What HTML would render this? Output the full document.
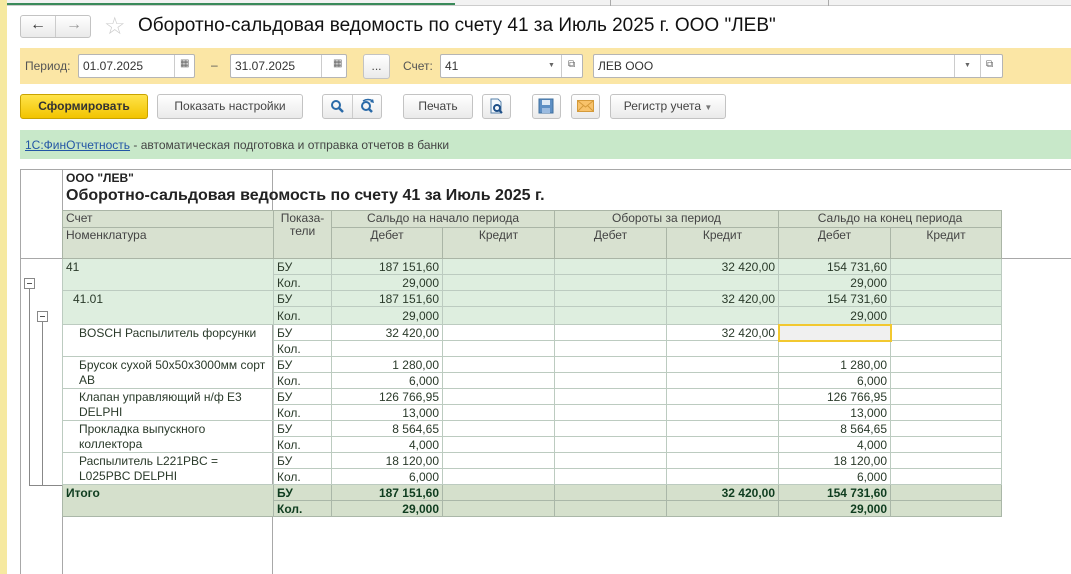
<!DOCTYPE html>
<html><head><meta charset="utf-8"><style>
*{box-sizing:border-box;margin:0;padding:0}
body{width:1071px;height:574px;overflow:hidden;background:#fff;font-family:"Liberation Sans",Arial,sans-serif;font-size:12px;color:#333;position:relative}
.a{position:absolute}
.btn{position:absolute;height:25px;border:1px solid #c3c3c3;border-radius:3px;background:linear-gradient(#fff,#eaeaea);font-size:12px;color:#444;text-align:center;line-height:23px}
.inp{position:absolute;height:24px;border:1px solid #b5b5b5;background:#fff;border-radius:2px;line-height:22px;padding-left:4px;font-size:12px;color:#333}
table{border-collapse:collapse;table-layout:fixed;position:absolute}
td{border:1px solid #bccbc0;padding:0 3px;height:16px;line-height:14px;white-space:nowrap;overflow:hidden;font-size:12px;color:#2a3a2a}
.r{text-align:right}
.g td{background:#deeedf}
.t td{background:#d5e0cc;font-weight:bold;color:#0f3d1f;border-color:#aab7a8}
.h td{background:#d8e1d0;color:#444;border-color:#aab5a6;vertical-align:top}
</style></head><body>
<div class="a" style="left:0;top:0;width:7px;height:574px;background:#f6e9a0"></div>
<div class="a" style="left:7px;top:0;width:1064px;height:6px;background:#f2f2f2;border-bottom:1px solid #ccc"></div>
<div class="a" style="left:7px;top:3px;width:448px;height:2px;background:#3a8a5a"></div>
<div class="a" style="left:610px;top:0;width:1px;height:6px;background:#aaa"></div>
<div class="a" style="left:828px;top:0;width:1px;height:6px;background:#aaa"></div>

<div class="btn" style="left:20px;top:15px;width:71px;height:23px"></div>
<div class="a" style="left:55px;top:16px;width:1px;height:21px;background:#ccc"></div>
<div class="a" style="left:30px;top:16px;font-size:16px;color:#333">&#8592;</div>
<div class="a" style="left:66px;top:16px;font-size:16px;color:#999">&#8594;</div>
<div class="a" style="left:104px;top:12px;font-size:24px;color:#ccc">&#9734;</div>
<div class="a" style="left:138px;top:15px;font-size:19px;color:#111">Оборотно-сальдовая ведомость по счету 41 за Июль 2025 г. ООО "ЛЕВ"</div>

<div class="a" style="left:20px;top:48px;width:1051px;height:36px;background:#fbe6a5"></div>
<div class="a" style="left:25px;top:59px;color:#555">Период:</div>
<div class="inp" style="left:78px;top:54px;width:117px">01.07.2025</div>
<div class="a" style="left:174px;top:55px;width:1px;height:22px;background:#ccc"></div>
<div class="a" style="left:180px;top:58px;font-size:10px;color:#666">&#9638;</div>
<div class="a" style="left:211px;top:58px;color:#555">–</div>
<div class="inp" style="left:230px;top:54px;width:117px">31.07.2025</div>
<div class="a" style="left:321px;top:55px;width:1px;height:22px;background:#ccc"></div>
<div class="a" style="left:333px;top:58px;font-size:10px;color:#666">&#9638;</div>
<div class="btn" style="left:363px;top:54px;width:27px">...</div>
<div class="a" style="left:403px;top:59px;color:#555">Счет:</div>
<div class="inp" style="left:440px;top:54px;width:143px">41</div>
<div class="a" style="left:561px;top:55px;width:1px;height:22px;background:#ccc"></div>
<div class="a" style="left:548px;top:62px;font-size:7px;color:#666">&#9660;</div>
<div class="a" style="left:568px;top:59px;font-size:10px;color:#666">&#10697;</div>
<div class="inp" style="left:593px;top:54px;width:410px">ЛЕВ ООО</div>
<div class="a" style="left:954px;top:55px;width:1px;height:22px;background:#ccc"></div>
<div class="a" style="left:980px;top:55px;width:1px;height:22px;background:#ccc"></div>
<div class="a" style="left:964px;top:62px;font-size:7px;color:#666">&#9660;</div>
<div class="a" style="left:986px;top:59px;font-size:10px;color:#666">&#10697;</div>

<div class="btn" style="left:20px;top:94px;width:128px;background:linear-gradient(#ffe34a,#f2c400);border-color:#c9a300;font-weight:bold;color:#333">Сформировать</div>
<div class="btn" style="left:157px;top:94px;width:146px">Показать настройки</div>
<div class="btn" style="left:322px;top:94px;width:60px"></div>
<div class="a" style="left:352px;top:95px;width:1px;height:23px;background:#ccc"></div>
<svg class="a" style="left:330px;top:99px" width="14" height="14"><circle cx="6" cy="6" r="4" fill="none" stroke="#2a6aa8" stroke-width="2"/><line x1="9" y1="9" x2="13" y2="13" stroke="#2a6aa8" stroke-width="2.5"/></svg>
<svg class="a" style="left:360px;top:98px" width="16" height="15"><circle cx="6" cy="8" r="4" fill="none" stroke="#2a6aa8" stroke-width="2"/><line x1="9" y1="11" x2="12" y2="14" stroke="#2a6aa8" stroke-width="2.5"/><path d="M3 3 Q8 0 13 3" fill="none" stroke="#2a6aa8" stroke-width="1.5"/><path d="M13 1 L14 5 L10 4Z" fill="#2a6aa8"/></svg>
<div class="btn" style="left:403px;top:94px;width:70px">Печать</div>
<div class="btn" style="left:482px;top:94px;width:29px"></div>
<svg class="a" style="left:489px;top:98px" width="16" height="17"><path d="M2 1 H9 L12 4 V15 H2Z" fill="#f4f8fc" stroke="#5580aa"/><circle cx="8" cy="10" r="3" fill="none" stroke="#1e4f88" stroke-width="2"/><line x1="10" y1="12" x2="13" y2="15" stroke="#1e4f88" stroke-width="2"/></svg>
<div class="btn" style="left:532px;top:94px;width:29px"></div>
<svg class="a" style="left:538px;top:98px" width="16" height="16"><rect x="1" y="1" width="14" height="14" fill="#5d8fc4" stroke="#3e6f9e"/><rect x="4" y="2" width="8" height="5" fill="#dfeaf5"/><rect x="4" y="10" width="8" height="5" fill="#9bbbe0"/></svg>
<div class="btn" style="left:571px;top:94px;width:29px"></div>
<svg class="a" style="left:577px;top:100px" width="17" height="12"><rect x="0.5" y="0.5" width="16" height="11" fill="#f8c26a" stroke="#d49a3a"/><path d="M1 1 L8.5 7 L16 1 M1 11 L6.5 5.5 M16 11 L10.5 5.5" fill="none" stroke="#d49a3a"/></svg>
<div class="btn" style="left:610px;top:94px;width:116px">Регистр учета <span style="font-size:8px;color:#777">&#9660;</span></div>

<div class="a" style="left:20px;top:130px;width:1051px;height:29px;background:#c8e8c9"></div>
<div class="a" style="left:25px;top:138px;color:#444"><span style="color:#2356a5;text-decoration:underline">1С:ФинОтчетность</span> - автоматическая подготовка и отправка отчетов в банки</div>

<div class="a" style="left:20px;top:169px;width:1051px;height:1px;background:#a8a8a8"></div>
<div class="a" style="left:20px;top:169px;width:1px;height:405px;background:#a8a8a8"></div>
<div class="a" style="left:62px;top:169px;width:1px;height:405px;background:#a8a8a8"></div>
<div class="a" style="left:272px;top:169px;width:1px;height:405px;background:#a8a8a8"></div>
<div class="a" style="left:20px;top:258px;width:1051px;height:1px;background:#a8a8a8"></div>
<div class="a" style="left:66px;top:171px;font-size:12px;font-weight:bold;color:#222">ООО "ЛЕВ"</div>
<div class="a" style="left:66px;top:187px;font-size:16px;font-weight:bold;color:#222">Оборотно-сальдовая ведомость по счету 41 за Июль 2025 г.</div>

<div class="a" style="left:24px;top:278px;width:11px;height:11px;border:1px solid #888;background:#fff"><div style="margin:4px 2px 0;height:1px;background:#555"></div></div>
<div class="a" style="left:37px;top:311px;width:11px;height:11px;border:1px solid #888;background:#fff"><div style="margin:4px 2px 0;height:1px;background:#555"></div></div>
<div class="a" style="left:29px;top:289px;width:1px;height:197px;background:#888"></div>
<div class="a" style="left:42px;top:322px;width:1px;height:164px;background:#888"></div>
<div class="a" style="left:29px;top:485px;width:33px;height:1px;background:#888"></div>

<table style="left:62px;top:210px">
<colgroup><col style="width:211px"><col style="width:58px"><col style="width:111px"><col style="width:112px"><col style="width:112px"><col style="width:112px"><col style="width:112px"><col style="width:111px"></colgroup>
<tr class="h"><td style="height:17px">Счет</td><td rowspan="2" style="text-align:center;line-height:13px;padding-top:1px">Показа-<br>тели</td><td colspan="2" style="text-align:center">Сальдо на начало периода</td><td colspan="2" style="text-align:center">Обороты за период</td><td colspan="2" style="text-align:center">Сальдо на конец периода</td></tr>
<tr class="h"><td style="height:31px">Номенклатура</td><td style="text-align:center">Дебет</td><td style="text-align:center">Кредит</td><td style="text-align:center">Дебет</td><td style="text-align:center">Кредит</td><td style="text-align:center">Дебет</td><td style="text-align:center">Кредит</td></tr>
<tr class="g"><td style="border-bottom:none">41</td><td>БУ</td><td class="r">187 151,60</td><td></td><td></td><td class="r">32 420,00</td><td class="r">154 731,60</td><td></td></tr>
<tr class="g"><td style="border-top:none"></td><td>Кол.</td><td class="r">29,000</td><td></td><td></td><td></td><td class="r">29,000</td><td></td></tr>
<tr class="g"><td style="border-bottom:none;padding-left:10px">41.01</td><td>БУ</td><td class="r">187 151,60</td><td></td><td></td><td class="r">32 420,00</td><td class="r">154 731,60</td><td></td></tr>
<tr class="g"><td style="border-top:none;height:18px"></td><td>Кол.</td><td class="r">29,000</td><td></td><td></td><td></td><td class="r">29,000</td><td></td></tr>
<tr><td style="border-bottom:none;padding-left:16px">BOSCH Распылитель форсунки</td><td>БУ</td><td class="r">32 420,00</td><td></td><td></td><td class="r">32 420,00</td><td style="background:#f0f0f0;outline:2px solid #f2c830;outline-offset:-1px"></td><td></td></tr>
<tr><td style="border-top:none"></td><td>Кол.</td><td></td><td></td><td></td><td></td><td></td><td></td></tr>
<tr><td style="border-bottom:none;padding-left:16px">Брусок сухой 50x50x3000мм сорт</td><td>БУ</td><td class="r">1 280,00</td><td></td><td></td><td></td><td class="r">1 280,00</td><td></td></tr>
<tr><td style="border-top:none;padding-left:16px">АВ</td><td>Кол.</td><td class="r">6,000</td><td></td><td></td><td></td><td class="r">6,000</td><td></td></tr>
<tr><td style="border-bottom:none;padding-left:16px">Клапан управляющий н/ф E3</td><td>БУ</td><td class="r">126 766,95</td><td></td><td></td><td></td><td class="r">126 766,95</td><td></td></tr>
<tr><td style="border-top:none;padding-left:16px">DELPHI</td><td>Кол.</td><td class="r">13,000</td><td></td><td></td><td></td><td class="r">13,000</td><td></td></tr>
<tr><td style="border-bottom:none;padding-left:16px">Прокладка выпускного</td><td>БУ</td><td class="r">8 564,65</td><td></td><td></td><td></td><td class="r">8 564,65</td><td></td></tr>
<tr><td style="border-top:none;padding-left:16px">коллектора</td><td>Кол.</td><td class="r">4,000</td><td></td><td></td><td></td><td class="r">4,000</td><td></td></tr>
<tr><td style="border-bottom:none;padding-left:16px">Распылитель L221PBC =</td><td>БУ</td><td class="r">18 120,00</td><td></td><td></td><td></td><td class="r">18 120,00</td><td></td></tr>
<tr><td style="border-top:none;padding-left:16px">L025PBC DELPHI</td><td>Кол.</td><td class="r">6,000</td><td></td><td></td><td></td><td class="r">6,000</td><td></td></tr>
<tr class="t"><td style="border-bottom:none">Итого</td><td>БУ</td><td class="r">187 151,60</td><td></td><td></td><td class="r">32 420,00</td><td class="r">154 731,60</td><td></td></tr>
<tr class="t"><td style="border-top:none"></td><td>Кол.</td><td class="r">29,000</td><td></td><td></td><td></td><td class="r">29,000</td><td></td></tr>
</table>
</body></html>
